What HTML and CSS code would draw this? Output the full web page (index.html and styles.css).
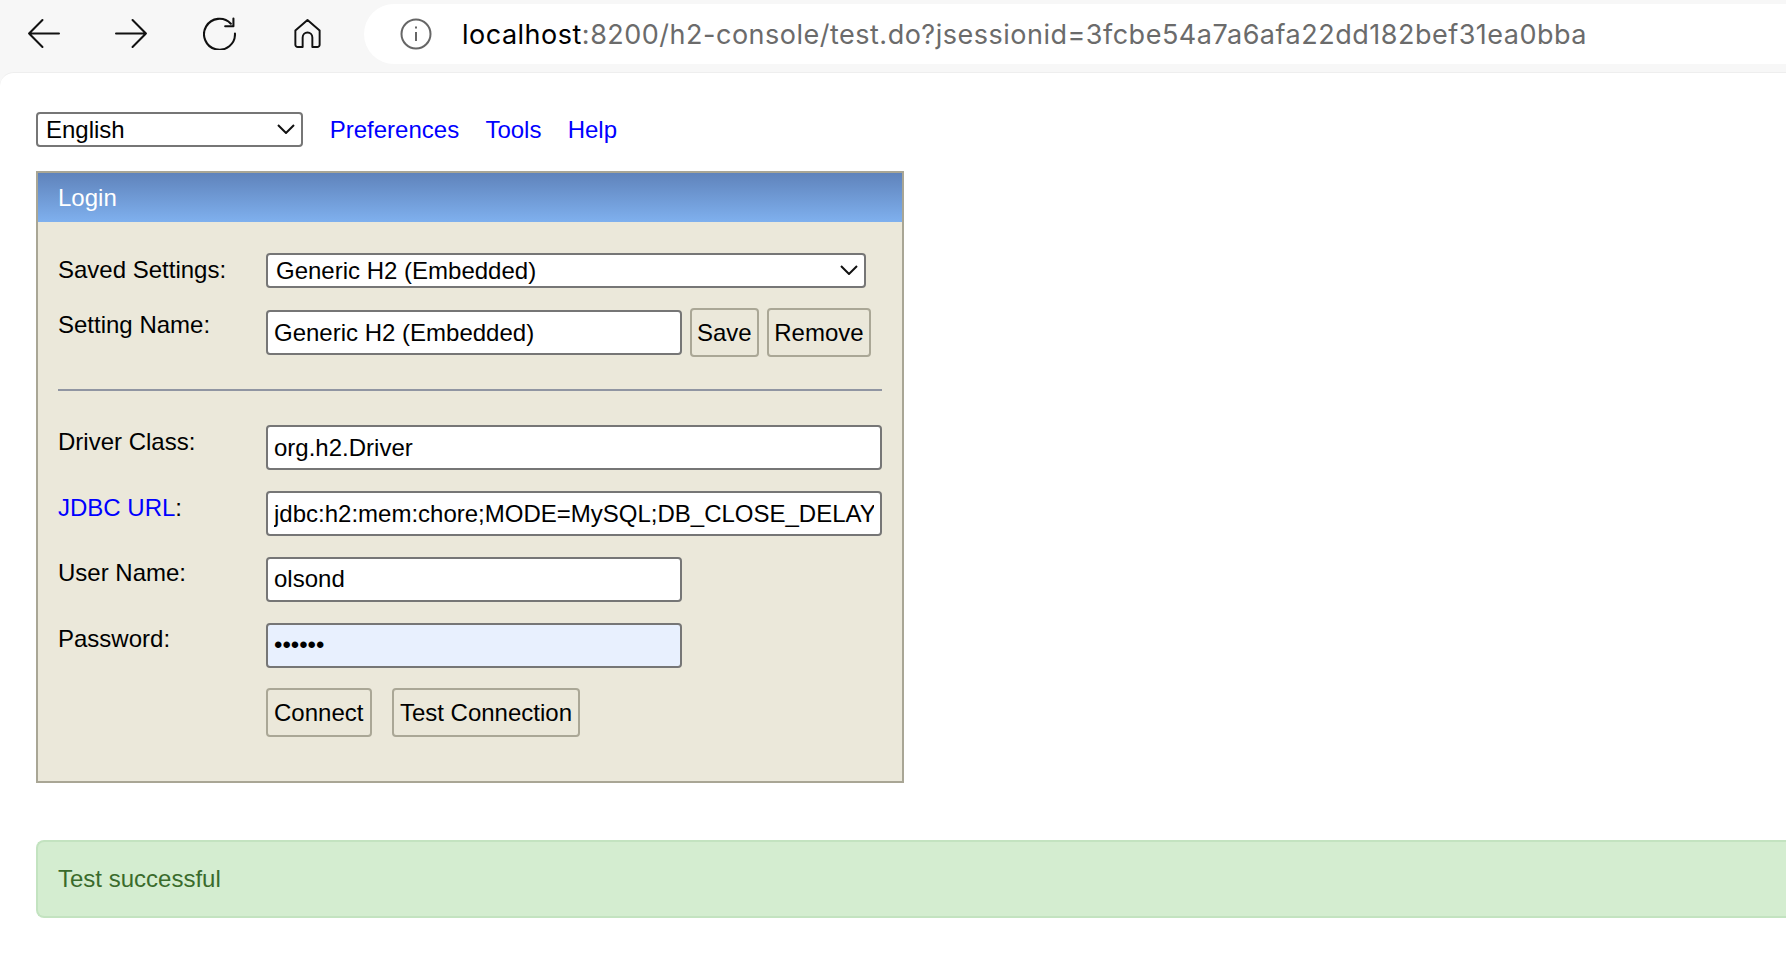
FILE: index.html
```html
<!DOCTYPE html>
<html lang="en">
<head>
<meta charset="utf-8">
<title>H2 Console</title>
<link rel="stylesheet" href="styles.css">
</head>
<body>
<header class="toolbar">
  <div class="nav-icons">
    <svg class="ico" viewBox="0 0 32 32"><path d="M31 16H2M15 3 2 16l13 13"/></svg>
    <svg class="ico" viewBox="0 0 32 32"><path d="M1 16h29M17 3l13 13-13 13"/></svg>
    <svg class="ico" viewBox="0 0 32 32"><path d="M27 6.500A15 15 0 1 0 31 16M29.500 1.500v7.500h-8"/></svg>
    <svg class="ico" viewBox="0 0 34 34"><path d="M12 31H7a2.500 2.500 0 0 1-2.500-2.500V14L17 3l12.500 11v14.500A2.500 2.500 0 0 1 27 31h-5V21a5 5 0 0 0-10 0z"/></svg>
  </div>
  <div class="address">
    <svg class="info" viewBox="0 0 32 32"><circle cx="16" cy="16" r="14.500"/><path d="M16 14v9M16 8.500v2"/></svg>
    <span class="url"><span class="host">localhost</span>:8200/h2-console/test.do?jsessionid=3fcbe54a7a6afa22dd182bef31ea0bba</span>
  </div>
</header>
<main class="page">
  <nav class="topnav">
    <div class="selectwrap lang">
      <select class="ctl-select"><option>English</option></select>
      <svg class="chev" viewBox="0 0 18 10"><path d="M1 1l8 8 8-8"/></svg>
    </div>
    <a href="#">Preferences</a>
    <a href="#">Tools</a>
    <a href="#">Help</a>
  </nav>
  <section class="login">
    <h1 class="login-head">Login</h1>
    <form class="login-form">
      <label class="lbl">Saved Settings:</label>
      <div class="selectwrap saved">
        <select class="ctl-select"><option>Generic H2 (Embedded)</option></select>
        <svg class="chev" viewBox="0 0 18 10"><path d="M1 1l8 8 8-8"/></svg>
      </div>
      <label class="lbl">Setting Name:</label>
      <div class="ctl-row">
        <input class="txt short" type="text" value="Generic H2 (Embedded)">
        <button class="btn" type="button">Save</button>
        <button class="btn" type="button">Remove</button>
      </div>
      <hr class="rule">
      <label class="lbl">Driver Class:</label>
      <input class="txt wide" type="text" value="org.h2.Driver">
      <label class="lbl"><a href="#">JDBC URL</a>:</label>
      <input class="txt wide" type="text" value="jdbc:h2:mem:chore;MODE=MySQL;DB_CLOSE_DELAY=-1">
      <label class="lbl">User Name:</label>
      <input class="txt short" type="text" value="olsond">
      <label class="lbl">Password:</label>
      <input class="txt short filled" type="password" value="secret">
      <div class="actions">
        <button class="btn" type="button">Connect</button>
        <button class="btn" type="button">Test Connection</button>
      </div>
    </form>
  </section>
  <div class="alert">Test successful</div>
</main>
</body>
</html>
```
FILE: styles.css
```css
* { box-sizing: border-box; }
html, body { margin: 0; height: 100%; overflow: hidden; }
body {
  background: #f7f7f7;
  font-family: "Liberation Sans", Arial, sans-serif;
  font-size: 24px;
  color: #000;
  display: flex;
  flex-direction: column;
}
.toolbar {
  height: 72px;
  flex: none;
  display: flex;
  align-items: flex-start;
  padding-left: 27px;
}
.nav-icons {
  display: flex;
  gap: 55px;
  height: 66px;
  align-items: center;
  width: 337px;
  flex: none;
}
.ico { width: 33px; height: 33px; flex: none; fill: none; stroke: #111; stroke-width: 2; stroke-linecap: round; stroke-linejoin: round; }
.address {
  margin-top: 4px;
  height: 60px;
  flex: 1;
  background: #fff;
  border-radius: 30px 0 0 30px;
  display: flex;
  align-items: center;
  padding-left: 36px;
  gap: 30px;
}
.info { width: 32px; height: 32px; flex: none; fill: none; stroke: #666; stroke-width: 2; }
.url {
  font-family: Inter, "Liberation Sans", sans-serif;
  font-size: 27px;
  letter-spacing: 0.500px;
  color: #6b6b6b;
  white-space: nowrap;
}
.host { color: #000; }
.page {
  flex: 1;
  background: #fff;
  border-top: 1px solid #eeeeee;
  border-radius: 14px 0 0 0;
  padding: 39px 0 0 36px;
  overflow: hidden;
}
a { color: #0000ff; text-decoration: none; }
.topnav { display: flex; align-items: center; gap: 26.250px; height: 35px; }
.selectwrap { position: relative; flex: none; }
.selectwrap.lang { width: 267px; height: 35px; margin-right: 0.500px; }
.selectwrap.saved { width: 600px; height: 34.500px; }
.ctl-select {
  appearance: none;
  width: 100%;
  height: 100%;
  padding: 0 8px;
  border: 2px solid #767676;
  border-radius: 4px;
  background: #fff;
  font: inherit;
  color: #000;
}
.chev { position: absolute; right: 8px; top: 12px; width: 18px; height: 10px; fill: none; stroke: #111; stroke-width: 2; pointer-events: none; }
.login {
  width: 868px;
  margin-top: 24px;
  border: 2px solid #a9a695;
  background: #ebe8da;
}
.login-head {
  margin: 0;
  height: 49px;
  padding-left: 20px;
  font-size: 24px;
  font-weight: normal;
  line-height: 49px;
  color: #fff;
  background: linear-gradient(#5f83bb, #7fb0ee);
}
.login-form {
  display: grid;
  grid-template-columns: 208px 616px;
  row-gap: 20.750px;
  padding: 31px 0 44px 20px;
}
.lbl { padding-top: 2.500px; line-height: 28px; }
.ctl-row { display: flex; align-items: center; gap: 7.500px; }
.txt {
  height: 45px;
  padding: 0 6px;
  border: 2px solid #767676;
  border-radius: 4px;
  background: #fff;
  font: inherit;
  color: #000;
}
.short { width: 416px; flex: none; }
.wide { width: 616px; }
.filled { background: #e8f0fe; }
.btn {
  height: 49px;
  padding: 0 5.500px;
  border: 2px solid #aaa796;
  border-radius: 4px;
  background: #ebe8da;
  font: inherit;
  color: #000;
}
.rule {
  grid-column: 1 / -1;
  width: 824px;
  height: 2px;
  margin: 11px 0 13.500px;
  border: 0;
  background: #9095a2;
}
.actions { grid-column: 2; display: flex; gap: 20px; }
.actions .btn:first-child { padding: 0 7px 0 6px; }
.alert {
  margin-top: 57px;
  height: 78px;
  padding-left: 20px;
  line-height: 74px;
  background: #d4edd0;
  border: 2px solid #c3e3c0;
  border-right: 0;
  border-radius: 8px 0 0 8px;
  color: #3a6b2c;
}
```
